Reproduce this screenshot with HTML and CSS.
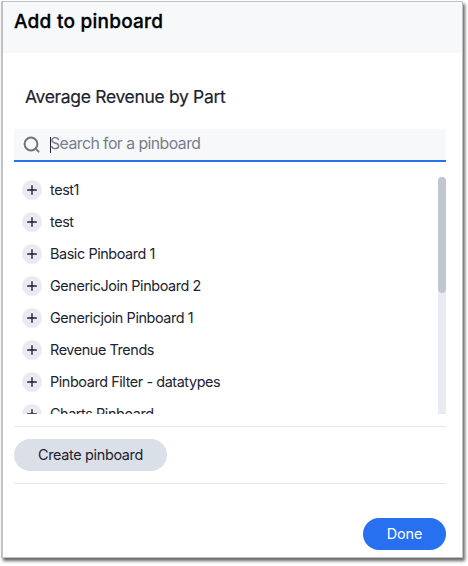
FILE: index.html
```html
<!DOCTYPE html>
<html lang="en">
<head>
<meta charset="utf-8">
<title>Add to pinboard</title>
<link rel="stylesheet" href="styles.css">
</head>
<body>
<main class="dialog">
  <header class="header"><h1 class="title">Add to pinboard</h1></header>
  <div class="body">
    <h2 class="subject">Average Revenue by Part</h2>
    <div class="search">
      <svg class="search-icon" width="18" height="18" viewBox="0 0 18 18"><circle cx="8" cy="8" r="6.4"/><path d="M12.6 12.6L15.6 15.6"/></svg>
      <span class="caret"></span>
      <span class="placeholder">Search for a pinboard</span>
    </div>
    <div class="list">
      <ul class="items">
        <li class="item"><svg class="plus" viewBox="0 0 20 20"><path d="M5.2 10H14.8M10 5.2V14.8"/></svg><span>test1</span></li>
        <li class="item"><svg class="plus" viewBox="0 0 20 20"><path d="M5.2 10H14.8M10 5.2V14.8"/></svg><span>test</span></li>
        <li class="item"><svg class="plus" viewBox="0 0 20 20"><path d="M5.2 10H14.8M10 5.2V14.8"/></svg><span>Basic Pinboard 1</span></li>
        <li class="item"><svg class="plus" viewBox="0 0 20 20"><path d="M5.2 10H14.8M10 5.2V14.8"/></svg><span>GenericJoin Pinboard 2</span></li>
        <li class="item"><svg class="plus" viewBox="0 0 20 20"><path d="M5.2 10H14.8M10 5.2V14.8"/></svg><span>Genericjoin Pinboard 1</span></li>
        <li class="item"><svg class="plus" viewBox="0 0 20 20"><path d="M5.2 10H14.8M10 5.2V14.8"/></svg><span>Revenue Trends</span></li>
        <li class="item"><svg class="plus" viewBox="0 0 20 20"><path d="M5.2 10H14.8M10 5.2V14.8"/></svg><span>Pinboard Filter - datatypes</span></li>
        <li class="item"><svg class="plus" viewBox="0 0 20 20"><path d="M5.2 10H14.8M10 5.2V14.8"/></svg><span>Charts Pinboard</span></li>
      </ul>
      <div class="track"><div class="thumb"></div></div>
    </div>
    <div class="create-row"><button class="button create">Create pinboard</button></div>
    <footer class="footer"><button class="button done">Done</button></footer>
  </div>
</main>
</body>
</html>
```

FILE: styles.css
```css
* { box-sizing: border-box; }
body { margin: 0; height: 566px; padding: 1px 0 0 1px; background: #fff; font-family: Inter, "Liberation Sans", sans-serif; color: #1d232f; }
.dialog {
  width: 462px; height: 557px;
  border: 1px solid #c2c2c2; border-left-width: 2px; background: #fff;
  box-shadow: 2px 3px 3px rgba(0, 0, 0, .6);
}
.header { height: 51px; padding: 8px 0 0 11px; background: #f6f8fa; }
.title { margin: 0; font-size: 19px; line-height: 24px; font-weight: 500; letter-spacing: .25px; color: #000; -webkit-text-stroke: .3px #000; }
.body { padding: 31px 16px 0 11px; }
.subject { margin: 0 0 0 11px; height: 45px; font-size: 17.5px; line-height: 26px; font-weight: 400; letter-spacing: -.33px; -webkit-text-stroke: .2px; }
.search { display: flex; align-items: center; height: 33px; padding-left: 9px; background: #f6f8fa; border-bottom: 2px solid #2770ef; font-size: 15.8px; letter-spacing: -.54px; color: #777e8b; }
.search-icon { fill: none; stroke: #6e7581; stroke-width: 2; stroke-linecap: round; }
.caret { width: 1px; height: 16px; margin-left: 9px; background: #1d232f; }
.placeholder { margin: -1px 0 0 -1px; line-height: 20px; }
.list { display: flex; justify-content: space-between; height: 237px; margin-top: 15px; overflow: hidden; }
.items { margin: -3px 0 0; padding: 0 0 0 8px; list-style: none; }
.item { display: flex; align-items: center; gap: 8px; height: 32px; padding-bottom: 1px; font-size: 14.4px; letter-spacing: -.41px; white-space: nowrap; }
.plus { width: 20px; height: 20px; margin-top: 1px; border-radius: 50%; background: #eaebf2; fill: none; stroke: #1d232f; stroke-width: 1.4; }
.track { width: 8px; background: #eaebf2; border-radius: 4px 4px 0 0; }
.thumb { height: 116px; border-radius: 4px; background: #c0c6cf; }
.create-row { height: 58px; margin-top: 12px; padding-top: 12px; border: solid #e3e5ee; border-width: 1px 0; }
.button { display: block; height: 32px; padding: 0; border: 0; border-radius: 16px; font: 14.4px/30px Inter, "Liberation Sans", sans-serif; letter-spacing: -.33px; }
.create { width: 153px; color: #1d232f; background: #dbdfe7; }
.footer { display: flex; justify-content: flex-end; padding-top: 34px; }
.done { width: 83px; color: #fff; background: #2770ef; letter-spacing: -.1px; }
```
